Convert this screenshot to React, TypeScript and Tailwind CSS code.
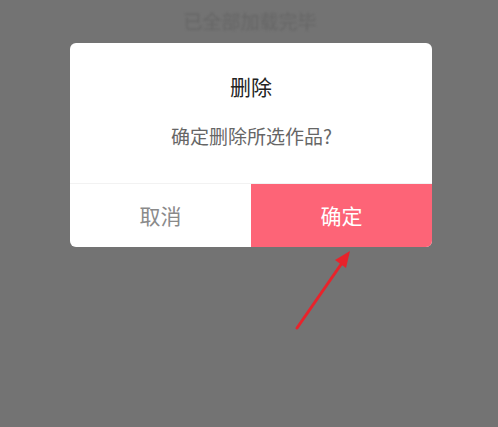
import React from "react";

const font = { fontFamily: '"Noto Sans CJK SC", "Noto Sans", sans-serif' };

export default function App() {
    return (
        <div className="relative w-[498px] h-[427px] bg-[#737373] overflow-hidden" style={font}>
            <div className="flex justify-center pl-[2px] pt-[8px] h-[43px]">
                <span className="text-[19px] leading-[26px] text-[#666666] blur-[1px]">已全部加载完毕</span>
            </div>

            <div className="ml-[70px] w-[362px] bg-white rounded-[6px] overflow-hidden flex flex-col">
                <div className="pt-[29px] pb-[34px] flex flex-col items-center gap-[21px]">
                    <div className="text-[21px] leading-[29px] text-[#222222]">删除</div>
                    <div className="text-[19px] leading-[27px] text-[#666666] pl-[1px]">确定删除所选作品?</div>
                </div>
                <div className="flex h-[64px] border-t border-[#f2f2f2]">
                    <button className="flex-1 flex items-center justify-center text-[21px] text-[#8a8a8a]">取消</button>
                    <button className="flex-1 flex items-center justify-center text-[21px] text-white bg-[#fd6477]">确定</button>
                </div>
            </div>

            <svg className="absolute left-0 top-0" width="498" height="427" viewBox="0 0 498 427">
                <line x1="297" y1="328" x2="342" y2="263" stroke="#e8232b" strokeWidth="3" strokeLinecap="round" />
                <polygon points="350,251 346,268 335,260" fill="#e8232b" />
            </svg>
        </div>
    );
}
